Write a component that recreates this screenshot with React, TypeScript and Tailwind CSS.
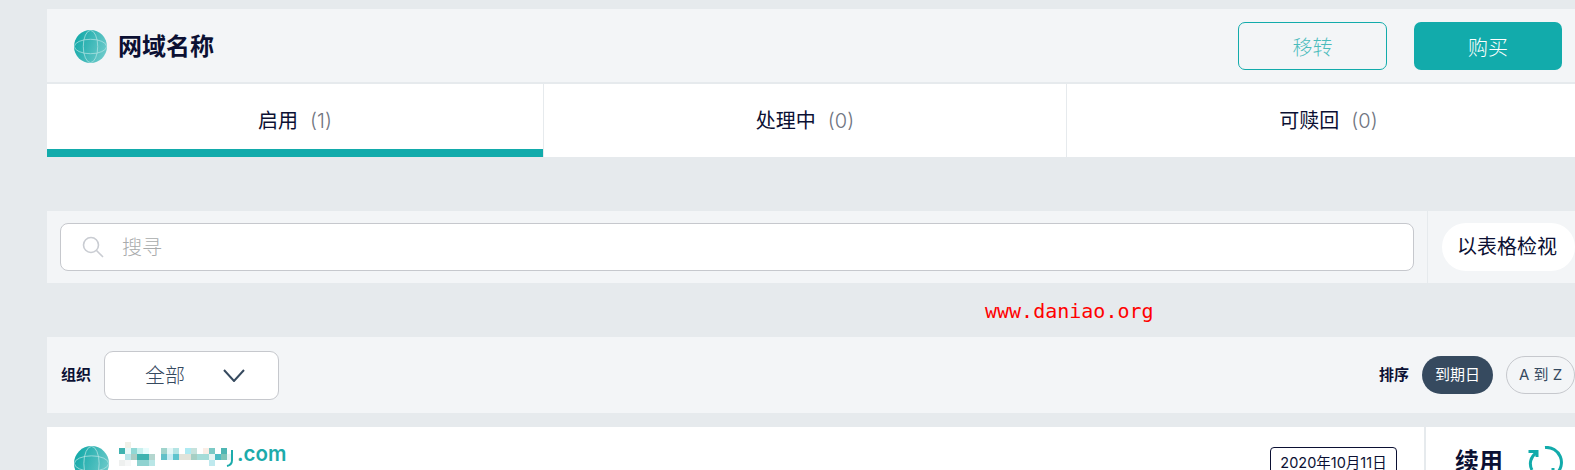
const cjk = "font-['Inter','Noto_Sans_CJK_SC',sans-serif]"

// blurred-out part of the domain name, [x, y, colour] on a 6px grid
const mosaic: [number, number, string][] = [
  [125, 442, '#f0f0e8'],
  [119, 448, '#3fb3b0'], [125, 448, '#e8f8f8'], [131, 448, '#90d8d5'], [137, 448, '#c8f0ee'], [143, 448, '#e8fcfc'],
  [161, 448, '#a0d4cc'], [167, 448, '#e4f6f6'], [173, 448, '#b4e4e4'], [185, 448, '#aeeaf2'], [191, 448, '#c6e2dc'],
  [203, 448, '#faeee6'], [209, 448, '#7ccac6'], [221, 448, '#4eb6b3'],
  [125, 454, '#b8e6ea'], [131, 454, '#a9ccc4'], [137, 454, '#3fb3b0'], [143, 454, '#3fb3b0'], [149, 454, '#b4d6cf'],
  [161, 454, '#61c0c8'], [167, 454, '#c9ecf3'], [173, 454, '#5ec4ce'], [179, 454, '#e1e3da'], [185, 454, '#e1e3da'],
  [191, 454, '#a6cfc4'], [197, 454, '#a5dcd8'], [203, 454, '#a5dcd8'], [209, 454, '#e8f5f3'], [215, 454, '#4fbcc4'],
  [221, 454, '#7cc4b8'], [227, 454, '#e8f4f4'],
  [119, 460, '#eef0ef'], [125, 460, '#f6f7f7'], [137, 460, '#8fd2d0'], [143, 460, '#8fd2d0'], [149, 460, '#b9e6e6'],
  [209, 460, '#bfe9ee'],
]

const Globe = ({ size }: { size: number }) => (
  <svg width={size} height={size} viewBox="0 0 32 32" className="shrink-0">
    <defs>
      <linearGradient id="globe" x1="0" y1="0.2" x2="1" y2="0.6">
        <stop offset="0" stopColor="#0fa8a7" />
        <stop offset="0.5" stopColor="#3db8b8" />
        <stop offset="1" stopColor="#6ccaca" />
      </linearGradient>
    </defs>
    <circle cx="16" cy="16" r="16" fill="url(#globe)" />
    <ellipse cx="16" cy="16" rx="7" ry="15.6" fill="none" stroke="#b5e4e4" strokeWidth="0.7" />
    <ellipse cx="16" cy="16" rx="15.6" ry="7" fill="none" stroke="#b5e4e4" strokeWidth="0.7" />
  </svg>
)

const tabs = [
  { label: '启用', count: '(1)', width: 'w-[497px]', active: true },
  { label: '处理中', count: '(0)', width: 'w-[523px]', active: false },
  { label: '可赎回', count: '(0)', width: 'w-[523px]', active: false },
]

export default function App() {
  return (
    <div className={`${cjk} h-[470px] w-[1575px] overflow-hidden bg-[#e6eaed] pt-[9px] pl-[47px] text-[#0b1033]`}>
      {/* header */}
      <div className="flex h-[75px] items-start border-b-2 border-[#e6eaed] bg-[#f3f5f7] pl-[27px] pr-[13px]">
        <div className="mt-[21px] flex items-center gap-[11px]">
          <Globe size={33} />
          <h1 className="text-[24px] leading-[32px] font-bold">网域名称</h1>
        </div>
        <button className="mt-[13px] ml-auto h-[48px] w-[149px] rounded-[7px] border border-[#12abab] pt-[3px] text-[20px] font-light text-[#4dbcbc]">移转</button>
        <button className="mt-[13px] ml-[27px] h-[48px] w-[148px] rounded-[7px] bg-[#12abab] pt-[3px] text-[20px] font-light text-white">购买</button>
      </div>

      {/* tabs */}
      <div className="flex h-[73px] overflow-hidden bg-white">
        {tabs.map(tab => (
          <div key={tab.label} className={`${tab.width} relative flex shrink-0 items-center justify-center gap-[12px] border-r border-[#e6eaed] text-[20px] last:border-r-0`}>
            <span>{tab.label}</span>
            <span className="font-light text-[#6f7480]">{tab.count}</span>
            {tab.active && <div className="absolute right-0 bottom-0 left-0 h-[8px] bg-[#12abab]" />}
          </div>
        ))}
      </div>

      {/* search */}
      <div className="mt-[54px] flex h-[72px] bg-[#f3f5f7] pl-[13px]">
        <div className="mt-[12px] flex h-[48px] w-[1354px] items-center rounded-[8px] border border-[#c6c8cd] bg-white pl-[21px]">
          <svg width="22" height="22" viewBox="0 0 22 22" fill="none" stroke="#c9ccd2" strokeWidth="1.6">
            <circle cx="9" cy="9" r="7.5" />
            <path d="M14.5 14.5 21 21" />
          </svg>
          <span className="ml-[18px] pt-[2px] text-[20px] font-light text-[#a8abac]">搜寻</span>
        </div>
        <div className="ml-[13px] w-px bg-[#e6eaed]" />
        <div className="mt-[12px] ml-[14px] flex h-[48px] flex-1 items-center rounded-full bg-white pl-[15px] text-[20px] whitespace-nowrap">以表格检视</div>
      </div>

      {/* watermark */}
      <div className="flex h-[54px] items-center pt-[2px] pl-[938px] font-['DejaVu_Sans_Mono',monospace] text-[20px] text-[#ff0000]">www.daniao.org</div>

      {/* filters */}
      <div className="flex h-[76px] items-center bg-[#f3f5f7] pl-[14px]">
        <span className="text-[15px] font-bold">组织</span>
        <div className="ml-[13px] flex h-[49px] w-[175px] items-center rounded-[9px] border border-[#c6c8cd] bg-white pl-[40px] text-[20px] font-light text-[#364a5f]">
          <span className="pt-px">全部</span>
          <svg width="22" height="13" viewBox="0 0 22 13" fill="none" stroke="#364a5f" strokeWidth="2" className="ml-[38px]">
            <path d="M1 1 11 12 21 1" />
          </svg>
        </div>
        <span className="ml-auto text-[15px] font-bold">排序</span>
        <div className="ml-[13px] flex h-[38px] w-[71px] items-center justify-center rounded-full bg-[#364a5f] text-[15px] text-white">到期日</div>
        <div className="ml-[13px] flex h-[38px] w-[69px] items-center justify-center rounded-full border border-[#c6c8cd] text-[15px] whitespace-nowrap text-[#364a5f]">A 到 Z</div>
      </div>

      {/* first row, cut off by the window */}
      <div className="mt-[14px] flex h-[60px] bg-white">
        <div className="relative flex-1 overflow-hidden pt-[19px] pl-[27px]">
          <Globe size={35} />
          <svg width="116" height="28" viewBox="119 442 116 28" className="absolute top-[15px] left-[72px]">
            {mosaic.map(([x, y, fill]) => (
              <rect key={`${x}-${y}`} x={x} y={y} width="6" height="6" fill={fill} />
            ))}
            <path d="M232 450v10q0 5-5 6" fill="none" stroke="#1cabab" strokeWidth="2" />
          </svg>
          <span className="absolute top-[12px] left-[190px] text-[20.5px] leading-[30px] font-semibold text-[#1cabab]">.com</span>
          <div className="absolute top-[20px] right-[27px] flex h-[32px] w-[127px] justify-center rounded-[4px] border border-[#0b1033] pt-[4px] text-[14.5px] whitespace-nowrap">2020年10月11日</div>
        </div>
        <div className="flex w-[151px] shrink-0 items-start border-l-2 border-[#e6eaed] pt-[19px] pl-[29px]">
          <span className="text-[24px] leading-[32px] font-bold">续用</span>
          <svg width="36" height="36" viewBox="0 0 36 36" fill="none" stroke="#12abab" strokeWidth="3" className="ml-[24px]">
            <path d="M1.5 5.5H10V11" />
            <path d="M9 7A13 13 0 0 0 5 24" />
            <path d="M18 1.5A15 15 0 0 1 29 28" />
            <path d="M26 22v2" />
          </svg>
        </div>
      </div>
    </div>
  )
}
